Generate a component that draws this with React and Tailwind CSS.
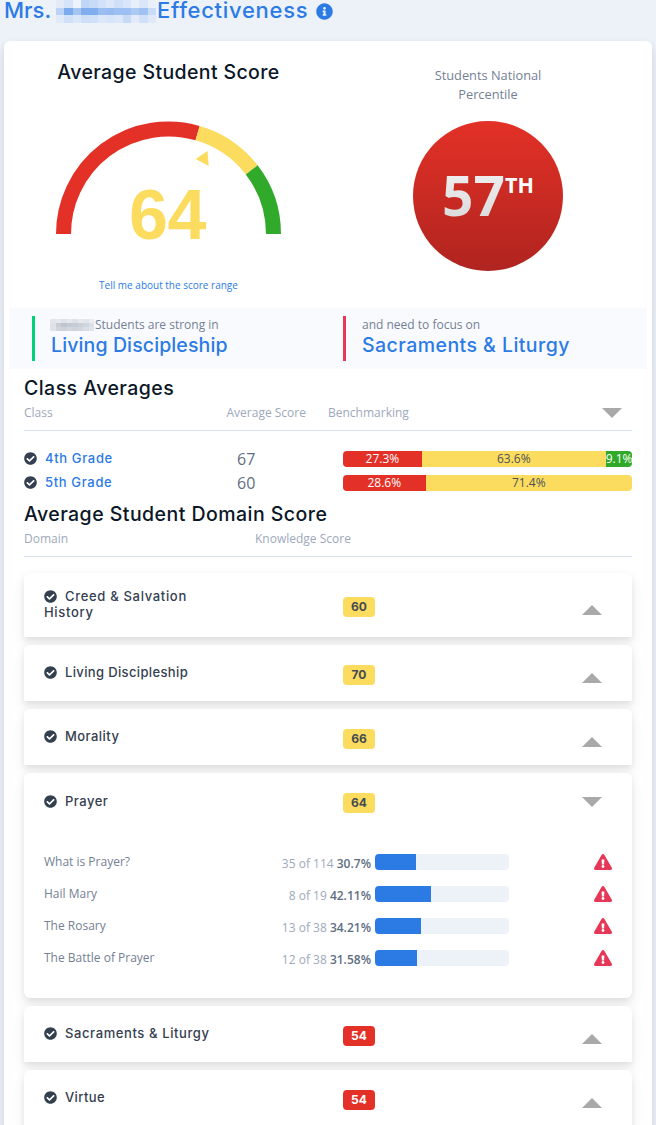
import { useState } from 'react';
import { FaCheckCircle, FaExclamationTriangle, FaInfoCircle } from 'react-icons/fa';

const classes = [
  {
    name: '4th Grade',
    score: 67,
    bands: [
      { value: 27.3, color: 'bg-[#e33127] text-white' },
      { value: 63.6, color: 'bg-[#fcdc5f] text-[#4d5156]' },
      { value: 9.1, color: 'bg-[#31a92a] text-white' },
    ],
  },
  {
    name: '5th Grade',
    score: 60,
    bands: [
      { value: 28.6, color: 'bg-[#e33127] text-white' },
      { value: 71.4, color: 'bg-[#fcdc5f] text-[#4d5156]' },
    ],
  },
];

const domains = [
  { name: 'Creed & Salvation History', score: 60, track: 'tracking-[0.68px]' },
  { name: 'Living Discipleship', score: 70, track: 'tracking-[0.36px]' },
  { name: 'Morality', score: 66, track: 'tracking-[0.45px]' },
  {
    name: 'Prayer',
    score: 64,
    track: 'tracking-[0.5px]',
    topics: [
      { name: 'What is Prayer?', count: '35 of 114', percent: 30.7 },
      { name: 'Hail Mary', count: '8 of 19', percent: 42.11 },
      { name: 'The Rosary', count: '13 of 38', percent: 34.21 },
      { name: 'The Battle of Prayer', count: '12 of 38', percent: 31.58 },
    ],
  },
  { name: 'Sacraments & Liturgy', score: 54, track: 'tracking-[0.6px]' },
  { name: 'Virtue', score: 54, track: 'tracking-[0.4px]' },
];

const titleBlocks = [
  ['#e3ebf8', '#d5e4f9', '#edf2fb', '#bfd6f6', '#c7dbf7', '#d3e2f8', '#dce8f9', '#cfe0f8', '#d9e6f9', '#e7effa', '#dae7f9', '#e9f0fa'],
  ['#bcd3f5', '#7baaed', '#a5c5f3', '#7fadee', '#80aeee', '#9bbef2', '#96bbf1', '#9dc0f2', '#9dc0f2', '#acc9f3', '#a0c2f2', '#c8dcf7'],
  ['#e0eaf9', '#cfe0f8', '#dbe7f9', '#cddff8', '#d0e0f8', '#dce8f9', '#d8e5f9', '#dce8f9', '#c6daf7', '#e1ebf9', '#cfe0f8', '#dfe9f9'],
];

const nameBlocks = [
  ['#e3e7ed', '#e5e8ee', '#dfe3e9', '#e5e8ee', '#dde1e8', '#e6e9ef', '#e2e6ec', '#e9ecf2'],
  ['#dde1e8', '#c9ced6', '#bfc5cf', '#c3c9d2', '#c6ccd5', '#cbd0d8', '#d1d6de', '#dce0e7'],
  ['#e0e4ea', '#d0d5dc', '#ccd2da', '#d2d7de', '#cfd4dc', '#d2d7df', '#d9dde4', '#e1e5eb'],
];

function Blocks({ rows, className }) {
  return (
    <span className={`flex flex-col ${className}`}>
      {rows.map((row, i) => (
        <span key={i} className="flex flex-1">
          {row.map((color, j) => (
            <span key={j} className="flex-1" style={{ backgroundColor: color }} />
          ))}
        </span>
      ))}
    </span>
  );
}

function Caret({ up }) {
  return (
    <svg width="20" height="10" viewBox="0 0 20 10" className="block fill-[#a9a9a9]">
      <path d={up ? 'M10 0 20 10H0z' : 'M0 0h20L10 10z'} />
    </svg>
  );
}

function Gauge() {
  return (
    <svg width="226" height="130" viewBox="0 0 226 130" className="mx-auto block">
      <g fill="none" strokeWidth="15">
        <path d="M7.5 113A105 105 0 0 1 141.6 12.1" stroke="#e33127" />
        <path d="M141.6 12.1A105 105 0 0 1 195.7 48.9" stroke="#fcdc5f" />
        <path d="M195.7 48.9A105 105 0 0 1 217.5 113" stroke="#31a92a" />
      </g>
      <path d="M139.7 38 151.5 30l1.2 15z" fill="#fcdc5f" />
      <text
        x="111.5"
        y="118"
        textAnchor="middle"
        fill="#fcdc5f"
        className="font-['Liberation_Sans',sans-serif] text-[70px] font-bold tracking-[-0.5px]"
      >
        64
      </text>
    </svg>
  );
}

function Domain({ domain }) {
  const [open, setOpen] = useState(!!domain.topics);

  return (
    <div
      className={`rounded-t-md bg-white shadow-[0_7px_14px_0_rgba(65,69,88,0.1),0_3px_6px_0_rgba(0,0,0,0.07)] ${open ? 'rounded-b-md' : ''}`}
    >
      <div
        className="grid min-h-14 cursor-pointer grid-cols-[299px_1fr_20px] items-center py-4 pr-[30px] pl-5"
        onClick={() => setOpen(!open)}
      >
        <div
          className={`w-[180px] font-['Inter',sans-serif] text-[13px] leading-4 font-medium text-[#344050] ${open ? '' : '-translate-y-px'} ${domain.track}`}
        >
          <FaCheckCircle className="mr-2 inline size-[13px] align-[-1.5px]" />
          {domain.name}
        </div>
        <div>
          <span
            className={`mt-1 block h-5 w-8 rounded text-center font-['Inter',sans-serif] text-xs leading-5 font-bold ${domain.score < 60 ? 'bg-[#e33127] text-white' : 'bg-[#fcdc5f] text-[#454b50]'}`}
          >
            {domain.score}
          </span>
        </div>
        <div className={open ? 'mt-0.5' : 'mt-2.5'}>
          <Caret up={!open} />
        </div>
      </div>
      {open && domain.topics && (
        <div className="px-5 pt-[17px] pb-6">
          {domain.topics.map((topic) => (
            <div key={topic.name} className="flex h-8 items-center text-xs">
              <div className="w-[200px] text-[#748194]">{topic.name}</div>
              <div className="mt-[3px] w-[127px] text-right text-[#9da9bb]">
                {topic.count} <span className="font-semibold text-[#5e6e82]">{topic.percent}%</span>
              </div>
              <div className="ml-1 h-4 w-[134px] overflow-hidden rounded bg-[#edf2f9]">
                <div className="h-full bg-[#2c7be5]" style={{ width: `${topic.percent}%` }} />
              </div>
              <FaExclamationTriangle className="ml-auto h-4 w-[18px] text-[#e63757]" />
            </div>
          ))}
        </div>
      )}
    </div>
  );
}

export default function App() {
  return (
    <div className="h-[1125px] overflow-hidden bg-[#edf2f9] px-1 font-['Open_Sans',sans-serif] text-[#5e6e82]">
      <h1 className="flex h-[41px] items-start font-['Inter',sans-serif] text-[22px] leading-5 font-medium text-[#2c7be5]">
        <span className="w-[52px]">Mrs.</span>
        <Blocks rows={titleBlocks} className="h-[23px] w-[100px]" />
        <span className="ml-px tracking-[0.7px]">Effectiveness</span>
        <FaInfoCircle className="mt-[3px] ml-2 size-[17px]" />
      </h1>

      <div className="rounded-md bg-white pb-5 shadow-[0_7px_14px_0_rgba(65,69,88,0.1),0_3px_6px_0_rgba(0,0,0,0.07)]">
        <div className="grid h-[267px] grid-cols-[329px_1fr]">
          <div className="pt-[19px] text-center">
            <h2 className="font-['Inter',sans-serif] text-[19.5px] leading-6 font-medium tracking-[0.38px] text-[#0b1727]">
              Average Student Score
            </h2>
            <div className="mt-[37px]">
              <Gauge />
            </div>
            <a className="mt-[26px] block text-[10px] leading-4 text-[#2c7be5]">Tell me about the score range</a>
          </div>
          <div className="pt-[25px] pr-[9px] text-center">
            <p className="mx-auto w-[130px] text-[12.8px] leading-[19px] text-[#748194]">Students National Percentile</p>
            <div className="mx-auto mt-[17px] flex size-[150px] items-start justify-center rounded-full bg-linear-to-b from-[#e33127] to-[#b0241f] pt-[35px] font-bold">
              <span className="bg-linear-to-b from-[#f5f5f5] to-[#d5d5d5] bg-clip-text text-[55px] leading-[78px] text-transparent">57</span>
              <span className="mt-[19px] text-[21.5px] leading-[19px] text-white">TH</span>
            </div>
          </div>
        </div>

        <div className="mx-[5px] grid h-[61px] grid-cols-[311px_1fr] bg-[#f9fafd] py-2 pl-[23px]">
          <div className="border-l-[3px] border-[#00d27a] pl-[15px]">
            <div className="flex h-[18px] items-center text-xs text-[#748194]">
              <Blocks rows={nameBlocks} className="h-[13px] w-[44px]" />
              <span className="ml-px">Students are strong in</span>
            </div>
            <div className="pl-px font-['Inter',sans-serif] text-[19.5px] leading-[23px] font-medium tracking-[0.12px] text-[#2c7be5]">
              Living Discipleship
            </div>
          </div>
          <div className="border-l-[3px] border-[#e63757] pl-4">
            <div className="h-[18px] text-xs leading-[18px] text-[#748194]">and need to focus on</div>
            <div className="font-['Inter',sans-serif] text-[19.5px] leading-[23px] font-medium tracking-[0.45px] text-[#2c7be5]">
              Sacraments &amp; Liturgy
            </div>
          </div>
        </div>

        <div className="px-5">
          <h2 className="pt-[7px] font-['Inter',sans-serif] text-[19.5px] leading-6 font-medium tracking-[0.45px] text-[#0b1727]">
            Class Averages
          </h2>
          <div className="flex h-[31px] items-start border-b border-[#d8e2ef] pt-1 text-xs leading-[18px] text-[#9da9bb]">
            <span className="w-[202.5px]">Class</span>
            <span className="w-[101.5px]">Average Score</span>
            <span>Benchmarking</span>
            <span className="mt-1 mr-2.5 ml-auto">
              <Caret />
            </span>
          </div>
          <div className="pt-4">
            {classes.map((row) => (
              <div key={row.name} className="flex h-6 items-center">
                <FaCheckCircle className="mr-2 mb-0.5 size-[13px] text-[#344050]" />
                <a className="w-48 font-['Inter',sans-serif] text-[13px] font-medium tracking-[0.65px] text-[#2c7be5]">{row.name}</a>
                <span className="w-[106px] text-base">{row.score}</span>
                <div className="flex h-4 flex-1 overflow-hidden rounded text-center text-xs leading-4">
                  {row.bands.map((band) => (
                    <div key={band.value} className={band.color} style={{ width: `${band.value}%` }}>
                      {band.value}%
                    </div>
                  ))}
                </div>
              </div>
            ))}
          </div>

          <h2 className="pt-[7px] font-['Inter',sans-serif] text-[19.5px] leading-6 font-medium tracking-[0.46px] text-[#0b1727]">
            Average Student Domain Score
          </h2>
          <div className="flex h-[31px] border-b border-[#d8e2ef] pt-1 text-xs leading-[18px] text-[#9da9bb]">
            <span className="w-[231px]">Domain</span>
            <span>Knowledge Score</span>
          </div>
          <div className="flex flex-col gap-2 pt-4">
            {domains.map((domain) => (
              <Domain key={domain.name} domain={domain} />
            ))}
          </div>
        </div>
      </div>
    </div>
  );
}
